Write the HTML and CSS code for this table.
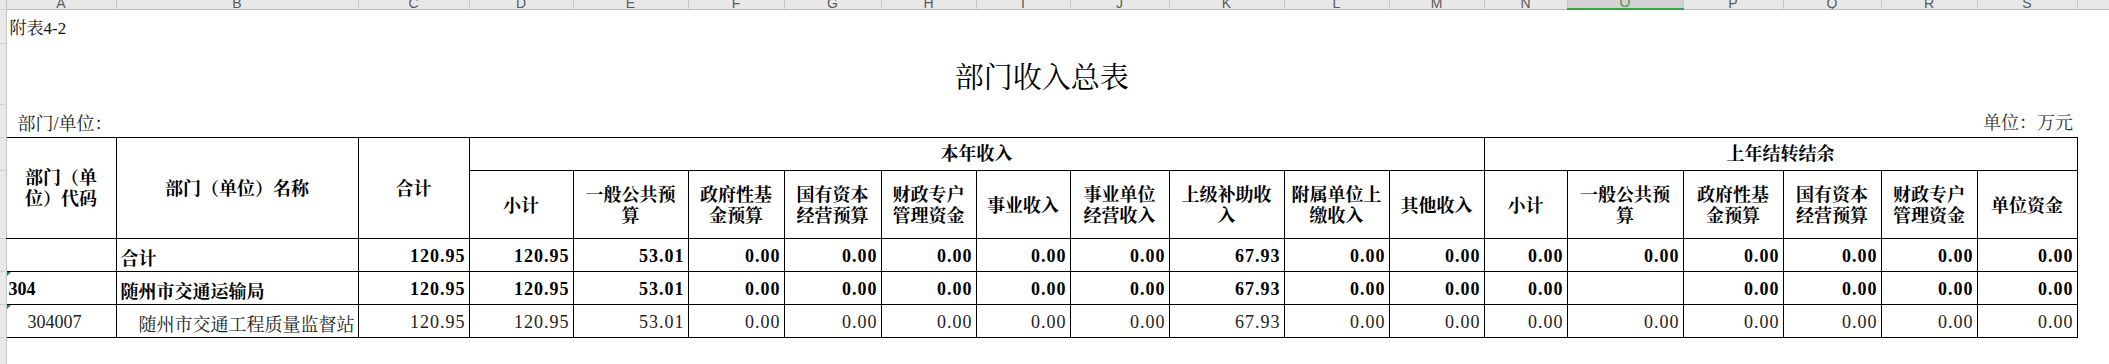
FILE: index.html
```html
<!DOCTYPE html>
<html lang="zh-CN">
<head>
<meta charset="utf-8">
<title>部门收入总表</title>
<link rel="stylesheet" href="styles.css">
</head>
<body>
<table class="sheet">
  <colgroup>
    <col class="c-rh"><col class="c-a"><col class="c-b"><col class="c-c"><col class="c-d"><col class="c-e"><col class="c-f"><col class="c-g"><col class="c-h"><col class="c-i"><col class="c-j"><col class="c-k"><col class="c-l"><col class="c-m"><col class="c-n"><col class="c-o"><col class="c-p"><col class="c-q"><col class="c-r"><col class="c-s"><col class="c-t">
  </colgroup>
  <tr class="r-ch">
    <th class="rh corner"></th>
    <th class="ch"><span>A</span></th><th class="ch"><span>B</span></th><th class="ch"><span>C</span></th><th class="ch"><span>D</span></th><th class="ch"><span>E</span></th><th class="ch"><span>F</span></th><th class="ch"><span>G</span></th><th class="ch"><span>H</span></th><th class="ch"><span>I</span></th><th class="ch"><span>J</span></th><th class="ch"><span>K</span></th><th class="ch"><span>L</span></th><th class="ch"><span>M</span></th><th class="ch"><span>N</span></th><th class="ch sel"><span>O</span></th><th class="ch"><span>P</span></th><th class="ch"><span>Q</span></th><th class="ch"><span>R</span></th><th class="ch"><span>S</span></th><th class="ch"></th>
  </tr>
  <tr class="r1">
    <td class="rh"></td>
    <td colspan="19" class="note">附表4-2</td>
    <td></td>
  </tr>
  <tr class="r2">
    <td class="rh"></td>
    <td colspan="19" class="title">部门收入总表</td>
    <td></td>
  </tr>
  <tr class="r3">
    <td class="rh"></td>
    <td colspan="2" class="dept">部门/单位：</td>
    <td colspan="17" class="unit">单位：万元</td>
    <td></td>
  </tr>
  <tr class="r4">
    <td class="rh"></td>
    <td rowspan="2" class="hd top first">部门（单<br>位）代码</td>
    <td rowspan="2" class="hd top">部门（单位）名称</td>
    <td rowspan="2" class="hd top">合计</td>
    <td colspan="10" class="hd top grp">本年收入</td>
    <td colspan="6" class="hd top grp">上年结转结余</td>
    <td class="blank"></td>
  </tr>
  <tr class="r5">
    <td class="rh"></td>
    <td class="hd">小计</td>
    <td class="hd">一般公共预<br>算</td>
    <td class="hd">政府性基<br>金预算</td>
    <td class="hd">国有资本<br>经营预算</td>
    <td class="hd">财政专户<br>管理资金</td>
    <td class="hd">事业收入</td>
    <td class="hd">事业单位<br>经营收入</td>
    <td class="hd">上级补助收<br>入</td>
    <td class="hd">附属单位上<br>缴收入</td>
    <td class="hd">其他收入</td>
    <td class="hd">小计</td>
    <td class="hd">一般公共预<br>算</td>
    <td class="hd">政府性基<br>金预算</td>
    <td class="hd">国有资本<br>经营预算</td>
    <td class="hd">财政专户<br>管理资金</td>
    <td class="hd">单位资金</td>
    <td class="blank"></td>
  </tr>
  <tr class="row bold">
    <td class="rh"></td>
    <td class="cell first"></td>
    <td class="cell name">合计</td>
    <td class="cell num">120.95</td>
    <td class="cell num">120.95</td>
    <td class="cell num">53.01</td>
    <td class="cell num">0.00</td>
    <td class="cell num">0.00</td>
    <td class="cell num">0.00</td>
    <td class="cell num">0.00</td>
    <td class="cell num">0.00</td>
    <td class="cell num">67.93</td>
    <td class="cell num">0.00</td>
    <td class="cell num">0.00</td>
    <td class="cell num">0.00</td>
    <td class="cell num">0.00</td>
    <td class="cell num">0.00</td>
    <td class="cell num">0.00</td>
    <td class="cell num">0.00</td>
    <td class="cell num">0.00</td>
    <td class="blank"></td>
  </tr>
  <tr class="row bold">
    <td class="rh"></td>
    <td class="cell first code flag">304</td>
    <td class="cell name">随州市交通运输局</td>
    <td class="cell num">120.95</td>
    <td class="cell num">120.95</td>
    <td class="cell num">53.01</td>
    <td class="cell num">0.00</td>
    <td class="cell num">0.00</td>
    <td class="cell num">0.00</td>
    <td class="cell num">0.00</td>
    <td class="cell num">0.00</td>
    <td class="cell num">67.93</td>
    <td class="cell num">0.00</td>
    <td class="cell num">0.00</td>
    <td class="cell num">0.00</td>
    <td class="cell num"></td>
    <td class="cell num">0.00</td>
    <td class="cell num">0.00</td>
    <td class="cell num">0.00</td>
    <td class="cell num">0.00</td>
    <td class="blank"></td>
  </tr>
  <tr class="row">
    <td class="rh"></td>
    <td class="cell first code sub flag">304007</td>
    <td class="cell name sub">随州市交通工程质量监督站</td>
    <td class="cell num">120.95</td>
    <td class="cell num">120.95</td>
    <td class="cell num">53.01</td>
    <td class="cell num">0.00</td>
    <td class="cell num">0.00</td>
    <td class="cell num">0.00</td>
    <td class="cell num">0.00</td>
    <td class="cell num">0.00</td>
    <td class="cell num">67.93</td>
    <td class="cell num">0.00</td>
    <td class="cell num">0.00</td>
    <td class="cell num">0.00</td>
    <td class="cell num">0.00</td>
    <td class="cell num">0.00</td>
    <td class="cell num">0.00</td>
    <td class="cell num">0.00</td>
    <td class="cell num">0.00</td>
    <td class="blank"></td>
  </tr>
  <tr class="r-end">
    <td class="rh"></td>
    <td colspan="20"></td>
  </tr>
</table>
</body>
</html>
```

FILE: styles.css
```css
html, body {
  margin: 0;
  padding: 0;
  background: #ffffff;
}

body {
  font-family: "Liberation Serif", "Noto Serif CJK SC", "Noto Sans CJK SC", serif;
  color: #1a1a1a;
  overflow: hidden;
}

.sheet {
  border-collapse: collapse;
  table-layout: fixed;
  width: 2109px;
}

td,
th {
  padding: 0;
  white-space: nowrap;
  overflow: hidden;
}

.c-rh { width: 6px; }
.c-a { width: 110px; }
.c-b { width: 242px; }
.c-c { width: 111px; }
.c-d { width: 104px; }
.c-e { width: 115px; }
.c-f { width: 96px; }
.c-g { width: 97px; }
.c-h { width: 95px; }
.c-i { width: 94px; }
.c-j { width: 99px; }
.c-k { width: 115px; }
.c-l { width: 105px; }
.c-m { width: 95px; }
.c-n { width: 83px; }
.c-o { width: 116px; }
.c-p { width: 100px; }
.c-q { width: 98px; }
.c-r { width: 96px; }
.c-s { width: 100px; }
.c-t { width: 32px; }

/* column header strip */
.r-ch { height: 8px; }
.ch {
  height: 8px;
  background: #e8e8e8;
  border-right: 1px solid #c8c8c8;
  border-bottom: 1px solid #bdbdbd;
  font-family: "Liberation Sans", Arial, sans-serif;
  font-weight: normal;
  font-size: 14px;
  color: #5a5a5a;
  text-align: center;
  vertical-align: bottom;
  line-height: 8px;
}
.ch span {
  display: block;
  height: 8px;
  line-height: 0px;
  padding-top: 2px;
  box-sizing: border-box;
}
.ch.sel {
  background: #d3d3d3;
  color: #3d9d43;
  border-bottom: 2px solid #3ba242;
}
.corner {
  background: #e8e8e8;
  border-bottom: 1px solid #bdbdbd;
}

/* row header strip */
.rh {
  background: #e8e8e8;
  border-right: 1px solid #c4c4c4;
  border-bottom: 1px solid #d0d0d0;
}

.r1 { height: 34px; }
.r2 { height: 61px; }
.r3 { height: 33px; }
.r4 { height: 33px; }
.r5 { height: 68px; }
.row { height: 33px; }
.r-end { height: 28px; }

.note {
  font-size: 17px;
  padding-left: 3px;
  color: #111;
  vertical-align: middle;
}

.title {
  font-size: 29px;
  text-align: center;
  vertical-align: middle;
  color: #000;
  padding-top: 4px;
}

.dept {
  font-size: 18px;
  padding-left: 11px;
  padding-top: 3px;
  color: #222;
}

.unit {
  font-size: 18px;
  text-align: right;
  padding-right: 4px;
  padding-top: 2px;
  color: #333;
}

/* table header */
.hd {
  font-size: 18px;
  font-weight: bold;
  line-height: 21px;
  color: #000;
  text-align: center;
  vertical-align: middle;
  padding-top: 4px;
  border-right: 1px solid #000;
  border-bottom: 1px solid #000;
}
.hd.top { border-top: 1px solid #000; }
.hd.grp { padding-top: 1px; }
.hd.first { padding-top: 2px; }

.blank { border: none; }

/* body cells */
.cell {
  font-size: 18px;
  color: #222;
  border-right: 1px solid #000;
  border-bottom: 1px solid #000;
  vertical-align: middle;
  padding-top: 4px;
}
.row.bold .cell {
  font-weight: bold;
  color: #000;
}
.num {
  text-align: right;
  padding-right: 3px;
  letter-spacing: 1px;
}
.name { padding-left: 4px; }
.code { padding-left: 2px; }
.code.sub { padding-left: 21px; }
.name.sub { padding-left: 22px; }

.flag { position: relative; }
.flag::before {
  content: "";
  position: absolute;
  left: 0;
  top: 0;
  border-top: 4px solid #1f8a3c;
  border-right: 4px solid transparent;
}
```
